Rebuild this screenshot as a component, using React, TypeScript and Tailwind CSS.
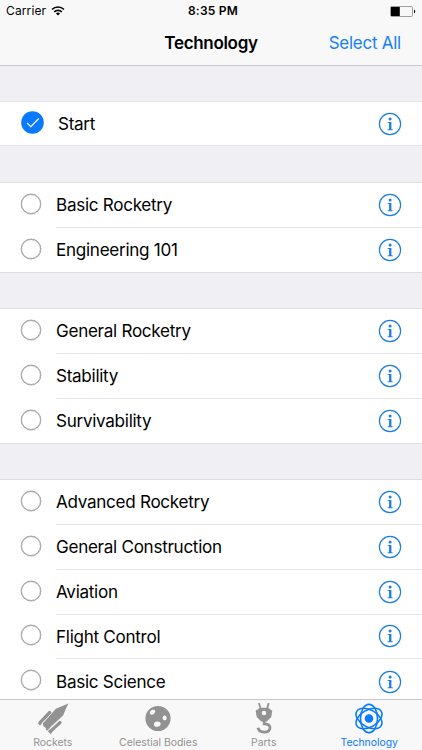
import type { ReactNode } from "react";

const groups = [
  ["Basic Rocketry", "Engineering 101"],
  ["General Rocketry", "Stability", "Survivability"],
  ["Advanced Rocketry", "General Construction", "Aviation", "Flight Control", "Basic Science"],
];

const InfoIcon = () => (
  <svg className="h-6 w-6 shrink-0" viewBox="0 0 24 24" fill="none" aria-hidden>
    <circle cx="12" cy="12" r="10.6" stroke="#1c7fe0" strokeWidth="1.2" />
    <circle cx="12.1" cy="6.9" r="1.5" fill="#1c7fe0" />
    <path d="M9.6 9.9h3.8v7.3l1.4.3v.8H9.5v-.8l1.6-.3v-6.3l-1.5-.2z" fill="#1c7fe0" />
  </svg>
);

const Row = ({ label, divider }: { label: string; divider: boolean }) => (
  <li className="flex h-[44.7px] items-center pl-[21px]">
    <span className="mb-[3px] h-5 w-5 shrink-0 rounded-full border-[1.5px] border-[#aaaaaa] bg-white shadow-[0_0_0_0.4px_#aaaaaa]" />
    <div className={`ml-[15px] flex h-full flex-1 items-center justify-between pr-5 ${divider ? "border-b border-[#e5e5e8]" : ""}`}>
      <span className="text-[17.1px] tracking-[-0.017em]">{label}</span>
      <InfoIcon />
    </div>
  </li>
);

const Tab = ({ label, active, children }: { label: string; active?: boolean; children: ReactNode }) => (
  <button className={`flex flex-1 flex-col items-center pt-[3px] ${active ? "text-[#087aff]" : "text-[#929292]"}`}>
    <svg className="h-8 w-8" viewBox="0 0 32 32" fill="currentColor" aria-hidden>
      {children}
    </svg>
    <span className="mt-px text-[10.4px] leading-[15px] whitespace-nowrap">{label}</span>
  </button>
);

const StatusBar = () => (
  <div className="flex h-[21px] items-center px-[6px] pt-px text-[12px]">
    <div className="flex flex-1 items-center gap-[5px]">
      <span className="tracking-[0.01em]">Carrier</span>
      <svg className="h-[10px] w-[14px]" viewBox="0 0 14 10" fill="none" stroke="currentColor" strokeWidth="1.6" aria-hidden>
        <path d="M1 3.5a8.6 8.6 0 0 1 12 0M3.2 5.9a5.4 5.4 0 0 1 7.6 0" />
        <path d="M7 9.6 4.9 7.5a3 3 0 0 1 4.2 0z" fill="currentColor" stroke="none" />
      </svg>
    </div>
    <span className="pl-1 font-semibold tracking-[0.02em]">8:35 PM</span>
    <div className="flex flex-1 justify-end">
      <svg className="h-[11px] w-[26px]" viewBox="0 0 26 11" aria-hidden>
        <rect x=".5" y=".5" width="22" height="10" rx="1.2" fill="none" stroke="#888" strokeWidth=".8" />
        <path d="M1 1h8.8v9H1z" />
        <path d="M24 3.6c1.6.5 1.6 3.3 0 3.8z" />
      </svg>
    </div>
  </div>
);

const App = () => (
  <div className="flex h-[750px] w-[422px] flex-col overflow-hidden bg-[#efeff4] font-['Inter',sans-serif] text-black">
    <header className="h-[66px] shrink-0 border-b border-[#c9c9cf] bg-[#f8f8f9]">
      <StatusBar />
      <div className="grid h-[45px] grid-cols-[1fr_auto_1fr] items-center px-[21px]">
        <h1 className="col-start-2 text-[17px] font-semibold tracking-[-0.018em]">Technology</h1>
        <button className="justify-self-end text-[17px] tracking-[-0.015em] whitespace-nowrap text-[#1680f5]">Select All</button>
      </div>
    </header>

    <main className="min-h-0 flex-1 overflow-hidden">
      <div className="mt-[35px] mb-[36px] flex h-[45px] items-center border-y border-[#e5e5ea] bg-white pr-5 pl-[21px]">
        <svg className="mb-[3px] h-[23px] w-[23px]" viewBox="0 0 23 23" fill="none" aria-hidden>
          <circle cx="11.5" cy="11.5" r="11.3" fill="#087aff" />
          <path d="m6.1 12 3.7 3.7 8-8.2" stroke="white" strokeWidth="1.1" />
        </svg>
        <span className="ml-[14px] flex-1 text-[17.1px] tracking-[-0.017em]">Start</span>
        <InfoIcon />
      </div>
      <div className="flex flex-col gap-[35px]">
        {groups.map((group) => (
          <ul key={group[0]} className="border-y border-[#dfdfe4] bg-white">
            {group.map((label, i) => (
              <Row key={label} label={label} divider={i < group.length - 1} />
            ))}
          </ul>
        ))}
      </div>
    </main>

    <nav className="flex h-[51px] shrink-0 border-t border-[#c8c8cc] bg-[#f8f8f8]">
      <Tab label="Rockets">
        <path d="M32 .5 27.6 2.2 19 5.9 5.5 20.9l.3 2.5 3.2 3 2.5.1L26.4 13l3.2-7.9z" />
        <path d="m12.6 9.8-9.2 9.6M23.2 20.2l-9.6 8.6" fill="none" stroke="currentColor" strokeWidth="3.4" strokeLinecap="round" />
        <path d="m1.6 18.3 3 2.9-1.9 2-2.2-2.1zM12.6 27.2l2.9 2.8-2 1.9-2.8-2.7zM11.5 23.8l1.8 1.6-3.4 3.2-1.7-1.6z" />
        <path d="m14.1 11-9 9.8M21.9 18.8l-9.7 8.7" fill="none" stroke="#f8f8f8" strokeWidth=".6" />
      </Tab>
      <Tab label="Celestial Bodies">
        <path fillRule="evenodd" d="M16 3a13 13 0 1 1 0 26 13 13 0 0 1 0-26zm-3.7 4.2c-2.3-1.1-5.3 1.4-4.6 3.7.8 2.4 5.5.6 5.5-2.2 0-.7-.3-1.2-.9-1.5zM22.7 13c-1.2.1-2.1 1.4-1.9 2.8.2 1.4 1.4 2.3 2.5 2.1 1.2-.2 1.8-1.5 1.6-2.9-.2-1.2-1.1-2.1-2.2-2zM15 19.1c-2 .2-3.5 1.7-3.2 3.3.3 1.7 2.1 2.6 4.1 2.1 1.9-.4 3.2-1.8 2.9-3.4-.3-1.3-1.9-2.2-3.8-2z" />
      </Tab>
      <Tab label="Parts">
        <path d="m9.8.3 1.9-.3 1.4 5h5.4L19.8 0l2 .3-1.3 4.9 4 2.7-1 6.6-4.6 4.5h-5.8l-4.6-4.5L7.4 8l4-2.8z" />
        <circle cx="16" cy="10.4" r="2.3" fill="#f8f8f8" />
        <path d="M16.2 17.5v4c3.8 0 6.2 1.5 6 4.1-.2 2.7-2.7 4.4-5.9 4.4-3.6 0-6.1-1.6-6.5-4.4" fill="none" stroke="currentColor" strokeWidth="2.8" />
      </Tab>
      <Tab label="Technology" active>
        <circle cx="16" cy="16" r="4.4" />
        <g fill="none" stroke="currentColor" strokeWidth="1.6">
          <ellipse cx="16" cy="16" rx="8.8" ry="14.6" />
          <ellipse cx="16" cy="16" rx="8.8" ry="14.6" transform="rotate(60 16 16)" />
          <ellipse cx="16" cy="16" rx="8.8" ry="14.6" transform="rotate(120 16 16)" />
        </g>
      </Tab>
    </nav>
  </div>
);

export default App;
